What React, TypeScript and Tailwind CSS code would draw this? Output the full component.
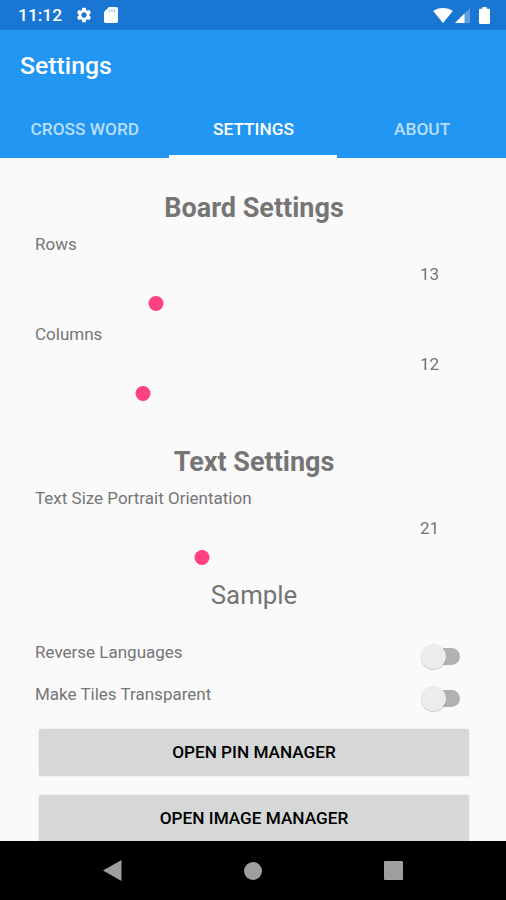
import { useState } from "react";
import { MdSettings } from "react-icons/md";

interface SliderSettingProps {
  label: string;
  value: number;
  min: number;
  max: number;
}

interface SwitchSettingProps {
  label: string;
}

const tabList = ["Cross Word", "Settings", "About"];

const StatusBar: React.FC = () => {
  return (
    <div className="w-full h-[30px] shrink-0 flex flex-row justify-between items-center pl-[18px] pr-4 bg-[#1976d2] text-white">
      <div className="flex flex-row items-center">
        <span className="w-[45px] text-[17.4px] leading-8 font-medium whitespace-nowrap">11:12</span>
        <MdSettings className="ml-3 w-[18px] h-[18px]" />
        <svg className="ml-[11px] w-[14px] h-4" viewBox="0 0 14 16" fill="currentColor">
          <path d="M5 0h7.3A1.7 1.7 0 0 1 14 1.7v12.6a1.7 1.7 0 0 1-1.7 1.7H1.7A1.7 1.7 0 0 1 0 14.3V5z" />
          <path d="M5.3 2.2v3M7.9 2.2v3M10.5 2.2v3" stroke="#1976d2" strokeOpacity=".45" strokeWidth="1.1" />
        </svg>
      </div>
      <div className="flex flex-row items-center">
        <svg className="w-5 h-[15px]" viewBox="0 0 20 15" fill="currentColor">
          <path d="M10 15 .2 3C2.8 1 6.2 0 10 0s7.2 1 9.8 3z" />
        </svg>
        <svg className="ml-[2px] w-[15px] h-[15px]" viewBox="0 0 15 15" fill="currentColor">
          <path d="M15 0v15H0z" fillOpacity=".3" />
          <path d="M9.5 5.5V15H0z" />
        </svg>
        <svg className="ml-[9px] w-[11px] h-[17px]" viewBox="0 0 11 17" fill="currentColor">
          <path d="M3.3 0h4.4v1.7h2.1c.7 0 1.2.5 1.2 1.2v12.9c0 .7-.5 1.2-1.2 1.2H1.2C.5 17 0 16.5 0 15.800V2.9c0-.7.5-1.2 1.2-1.2h2.1z" />
        </svg>
      </div>
    </div>
  );
};

const SliderSetting: React.FC<SliderSettingProps> = (props: SliderSettingProps) => {
  const { label, value, min, max } = props;
  const percent = ((value - min) / (max - min)) * 100;

  return (
    <div className="w-full flex flex-col">
      <span className="h-[30px] leading-[30px]">{label}</span>
      <span className="h-[30px] leading-[30px] pr-[34px] text-right">{value}</span>
      <div className="h-[30px] flex flex-row items-center pl-[81px] pr-[89px] pb-[2px]">
        <div className="relative w-full h-[15px]">
          <div className="absolute top-0 w-[15px] h-[15px] -translate-x-1/2 rounded-full bg-[#ff4081]" style={{ left: `${percent}%` }} />
        </div>
      </div>
    </div>
  );
};

const SwitchSetting: React.FC<SwitchSettingProps> = (props: SwitchSettingProps) => {
  const { label } = props;
  const [checked, setChecked] = useState(false);

  return (
    <div className="w-full h-[41px] flex flex-row justify-between items-center pr-[13px]">
      <span className="pb-2">{label}</span>
      <button
        className="w-[39px] h-[25px] flex flex-row items-center cursor-pointer"
        role="switch"
        aria-checked={checked}
        aria-label={label}
        onClick={() => setChecked(!checked)}
      >
        <span className={`w-[25px] h-[25px] shrink-0 rounded-full shadow-[0_1px_1px_rgba(0,0,0,0.2)] z-10 ${checked ? "order-2 bg-[#ff4081]" : "bg-[#ececec]"}`} />
        <span className={`w-[27px] h-[17px] shrink-0 ${checked ? "-mr-[13px] rounded-l-full bg-[#ff80ab]" : "-ml-[13px] rounded-r-full bg-[#b1b1b1]"}`} />
      </button>
    </div>
  );
};

const App: React.FC = () => {
  const [currentTab, setCurrentTab] = useState("Settings");

  return (
    <div className="w-[506px] h-[900px] flex flex-col overflow-hidden bg-[#fafafa] font-[Roboto,sans-serif] text-[17px] text-[#757575]">
      <StatusBar />
      <header className="w-full h-[128px] shrink-0 flex flex-col bg-[#2196f3] text-white">
        <h1 className="h-[70px] pl-5 text-[24.8px] leading-[71px] font-medium">Settings</h1>
        <nav className="w-full grow grid grid-cols-3">
          {tabList.map((tab) => {
            return (
              <button
                key={tab}
                className={`pt-[5px] pl-px border-b-3 text-[17.3px] uppercase font-medium cursor-pointer ${
                  tab === currentTab ? "border-white text-white" : "border-transparent text-white/70"
                }`}
                onClick={() => setCurrentTab(tab)}
              >
                {tab}
              </button>
            );
          })}
        </nav>
      </header>

      <main className="w-full grow min-h-0 flex flex-col overflow-hidden pl-[35px] pr-[33px]">
        <h2 className="mt-8 mb-[3px] h-9 shrink-0 text-center text-[27px] leading-9 font-bold">Board Settings</h2>
        <SliderSetting label="Rows" value={13} min={10} max={30} />
        <SliderSetting label="Columns" value={12} min={10} max={30} />
        <h2 className="mt-[35px] mb-[3px] h-9 shrink-0 text-center text-[27px] leading-9 font-bold">Text Settings</h2>
        <SliderSetting label="Text Size Portrait Orientation" value={21} min={12} max={40} />
        <p className="mt-1 mb-[23px] h-9 shrink-0 text-center text-[25.8px] leading-9">Sample</p>
        <div className="w-full shrink-0 flex flex-col">
          <SwitchSetting label="Reverse Languages" />
          <div className="pt-px">
            <SwitchSetting label="Make Tiles Transparent" />
          </div>
        </div>
        <div className="mt-[10px] px-1 shrink-0 flex flex-col gap-[19px] text-[17.2px] text-black">
          <button className="w-full h-[47px] pt-px rounded-[2px] bg-[#d6d7d7] shadow-[0_0_2px_rgba(0,0,0,0.15)] font-medium uppercase cursor-pointer">
            Open Pin Manager
          </button>
          <button className="w-full h-[47px] pt-px rounded-[2px] bg-[#d6d7d7] shadow-[0_0_2px_rgba(0,0,0,0.15)] font-medium uppercase cursor-pointer">
            Open Image Manager
          </button>
        </div>
      </main>

      <footer className="w-full h-[59px] shrink-0 flex flex-row justify-between items-center pl-[103px] pr-[103px] bg-black text-[#9e9e9e]">
        <svg className="w-[19px] h-[21px]" viewBox="0 0 19 21" fill="currentColor">
          <path d="M18.5 0v21L0 10.5z" />
        </svg>
        <div className="w-[18px] h-[18px] rounded-full bg-[#9e9e9e]" />
        <div className="w-[19px] h-[19px] rounded-[1px] bg-[#9e9e9e]" />
      </footer>
    </div>
  );
};

export default App;
